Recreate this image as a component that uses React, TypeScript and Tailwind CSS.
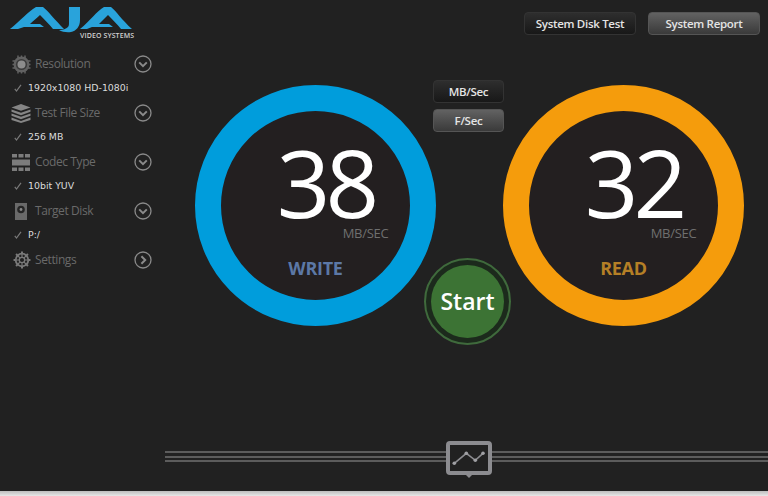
const sans = "font-['Open_Sans','Noto_Sans',sans-serif]";

function Chip() {
  return (
    <svg width="19" height="19" viewBox="0 0 19 19">
      <circle cx="9.5" cy="9.5" r="8" fill="#626262" />
      <g stroke="#626262" strokeWidth="1.5">
        <path d="M6 .5v18M9.5.5v18M13 .5v18M.5 6h18M.5 9.5h18M.5 13h18" />
      </g>
      <circle cx="9.5" cy="9.5" r="5.6" fill="#3a3a3a" />
      <circle cx="9.5" cy="9.5" r="4" fill="#8c8c8c" />
    </svg>
  );
}
function Stack() {
  return (
    <svg width="20" height="20" viewBox="0 0 20 20" fill="#858585">
      <path d="M10 1l9.5 3.4L10 7.8.5 4.4z" />
      <path d="M.5 6.4l9.5 3.4 9.5-3.4v2.4L10 12.2.5 8.8z" />
      <path d="M.5 10.4l9.5 3.4 9.5-3.4v2.4L10 16.2.5 12.8z" />
      <path d="M.5 14.6L10 18l9.5-3.4V17L10 20 .5 17z" />
    </svg>
  );
}
function Codec() {
  return (
    <svg width="18" height="17" viewBox="0 0 18 17" fill="#7c7c7c">
      <path d="M0 0h5v3.5H0zM6.500 0h5v3.500h-5zM13 0h5v3.500h-5z" />
      <path d="M0 5.500h18v6H0z" />
      <path d="M0 13.500h5V17H0zM6.500 13.500h5V17h-5zM13 13.500h5V17h-5z" />
    </svg>
  );
}
function Disk() {
  return (
    <svg width="12" height="17" viewBox="0 0 12 17">
      <rect width="12" height="17" fill="#6a6a6a" />
      <circle cx="6" cy="6.500" r="3.800" fill="#262626" />
      <circle cx="6" cy="6.500" r="1.400" fill="#8a8a8a" />
    </svg>
  );
}
function Gear() {
  return (
    <svg width="18" height="18" viewBox="0 0 20 20" fill="none" stroke="#7a7a7a">
      <circle cx="10" cy="10" r="7" strokeWidth="2" />
      <circle cx="10" cy="10" r="3" strokeWidth="1.400" />
      <path strokeWidth="1.300" d="M10 3v4M10 13v4M3 10h4M13 10h4M5 5l3 3M12 12l3 3M15 5l-3 3M8 12l-3 3" />
      <path strokeWidth="2.200" d="M10 .6v2M10 17.400v2M.6 10h2M17.400 10h2M3.400 3.400l1.400 1.400M15.200 15.200l1.400 1.400M16.600 3.400l-1.400 1.400M4.800 15.200l-1.400 1.400" />
    </svg>
  );
}
function Circle({ right }: { right?: boolean }) {
  return (
    <svg width="18" height="18" viewBox="0 0 18 18" fill="none" stroke="#8a8a8a">
      <circle cx="9" cy="9" r="8" strokeWidth="1.300" />
      <path strokeWidth="2" d={right ? "M7.400 5.200L11.200 9l-3.800 3.800" : "M5.200 7.400L9 11.200l3.800-3.800"} />
    </svg>
  );
}
function Check() {
  return (
    <svg width="8" height="8" viewBox="0 0 8 8" fill="none" stroke="#7a7a7a" strokeWidth="1.200">
      <path d="M.8 4.800L2.500 7 7 .8" />
    </svg>
  );
}

function Row({ icon, label, sub, right, iconClass }: { icon: React.ReactNode; label: string; sub?: string; right?: boolean; iconClass: string }) {
  return (
    <div>
      <div className="flex h-[25px] items-center pt-[1px]">
        <div className={`${iconClass} flex w-[35px] shrink-0 justify-start`}>{icon}</div>
        <span className={`${sans} w-[99px] text-[12px] tracking-[-0.4px] text-[#6a6a6a]`}>{label}</span>
        <Circle right={right} />
      </div>
      {sub && (
        <div className="flex h-[24px] items-center">
          <div className="flex w-[28px] pl-[14px]"><Check /></div>
          <span className="font-['DejaVu_Sans',sans-serif] text-[9.4px] text-[#dcdcdc]">{sub}</span>
        </div>
      )}
    </div>
  );
}

function Btn({ label, active, w }: { label: string; active?: boolean; w: string }) {
  return (
    <div
      className={`${sans} ${w} flex h-[23px] items-center justify-center rounded-[4px] border text-[11.5px] font-semibold tracking-[-0.3px] text-[#e4e4e4] ${
        active
          ? "border-[#555] bg-gradient-to-b from-[#626262] to-[#3a3a3a]"
          : "border-[#333] bg-gradient-to-b from-[#2e2e2e] to-[#181818]"
      }`}
    >
      {label}
    </div>
  );
}

function Gauge({ value, label, ring, labelColor }: { value: string; label: string; ring: string; labelColor: string }) {
  return (
    <div className={`${ring} flex h-[241px] w-[241px] shrink-0 items-center justify-center rounded-full border-[26px] bg-[#231f20]`}>
      <div className={`${sans} flex flex-col items-center pt-[8px]`}>
        <div className="h-[86px] pl-[20px] text-[94px] font-normal leading-[86px] tracking-[-5px] text-white">{value}</div>
        <div className="ml-[100px] mt-[2px] h-[12px] text-[13px] leading-[12px] tracking-[-0.3px] text-[#6f6f6f]">MB/SEC</div>
        <div className={`${labelColor} mt-[17px] text-[18px] font-bold leading-[24px] tracking-[-0.3px]`}>{label}</div>
      </div>
    </div>
  );
}

export default function App() {
  return (
    <div className="relative flex h-[496px] w-[768px] flex-col overflow-hidden bg-[#212121]">
      <div className="flex h-[431px]">
        <aside className="w-[165px] shrink-0 pt-[5px]">
          <div className="relative h-[46px]">
            <svg width="140" height="32" viewBox="0 0 140 32" fill="#29a3db">
              <path d="M10 24C20 16 29 6 36 2h7c5 4 12 13 21 22H53c-4-5-9-10-13-14-3 3-7 6-10 9h10l4 3H24l-6 2z" />
              <path d="M69 2h11v13c0 7-4 11-9 12-4 .5-9 0-12-2 4 0 7-1 9-3 1-1 1-3 1-5z" />
              <path d="M80 24c10-8 17-18 24-22h7c5 4 11 13 21 22h-11c-4-5-9-10-13-14-3 3-6 6-9 9h10l4 3H92l-5 2z" />
            </svg>
            <span className="absolute left-[80px] top-[26px] font-['Open_Sans',sans-serif] text-[7px] font-semibold leading-[10px] tracking-[0.1px] text-[#d0d0d0]">
              VIDEO SYSTEMS
            </span>
          </div>
          <div>
            <Row iconClass="pl-[12px]" icon={<Chip />} label="Resolution" sub="1920x1080 HD-1080i" />
            <Row iconClass="pl-[11px]" icon={<Stack />} label="Test File Size" sub="256 MB" />
            <Row iconClass="pl-[12px]" icon={<Codec />} label="Codec Type" sub="10bit YUV" />
            <Row iconClass="pl-[15px]" icon={<Disk />} label="Target Disk" sub="P:/" />
            <Row iconClass="pl-[13px]" icon={<Gear />} label="Settings" right />
          </div>
        </aside>
        <main className="flex-1 pl-[30px]">
          <div className="flex h-[85px] justify-end gap-[12px] pr-[8px] pt-[12px]">
            <Btn label="System Disk Test" w="w-[112px]" />
            <Btn label="System Report" active w="w-[112px]" />
          </div>
          <div className="flex">
            <Gauge value="38" label="WRITE" ring="border-[#009ddc]" labelColor="text-[#5c78a6]" />
            <div className="relative z-10 -ml-[3px] -mr-[1px] flex w-[71px] shrink-0 flex-col items-center">
              <div className="-mt-[5px] flex flex-col gap-[6px]">
                <Btn label="MB/Sec" w="w-[71px]" />
                <Btn label="F/Sec" active w="w-[71px]" />
              </div>
              <div className="-ml-[2px] mt-[126px] flex h-[87px] w-[87px] shrink-0 items-center justify-center rounded-full border-2 border-[#3f6a3c] bg-[#1c2a1c]">
                <div className={`${sans} flex h-[73px] w-[73px] items-center justify-center rounded-full bg-[#3c7334] text-[23px] font-semibold text-white`}>
                  Start
                </div>
              </div>
            </div>
            <Gauge value="32" label="READ" ring="border-[#f59c0c]" labelColor="text-[#b57f26]" />
          </div>
        </main>
      </div>
      <div className="relative flex h-[60px] items-start pl-[165px]">
        <div className="mt-[20px] flex h-[11px] w-full flex-col justify-between">
          <div className="h-[2px] bg-[#5c5c5c]" />
          <div className="h-[2px] bg-[#5c5c5c]" />
          <div className="h-[2px] bg-[#5c5c5c]" />
        </div>
        <svg className="absolute left-[446px] top-[10px]" width="46" height="38" viewBox="0 0 46 38" fill="none">
          <rect x="2" y="2" width="42" height="30" rx="2" fill="#212121" stroke="#8c8c90" strokeWidth="4" />
          <path d="M20 34h6l-3 3z" fill="#8c8c90" />
          <path d="M8.300 22.300l12-10 9 7 7.700-7" stroke="#8c8c90" strokeWidth="1.600" />
          <g fill="#a0a0a4"><circle cx="8.300" cy="22.300" r="1.800" /><circle cx="20.300" cy="12.300" r="1.800" /><circle cx="29.300" cy="19.300" r="1.800" /><circle cx="37" cy="12.300" r="1.800" /></g>
        </svg>
      </div>
      <div className="h-[5px] bg-gradient-to-b from-[#bdbdbd] to-[#e8e8e8]" />
    </div>
  );
}
